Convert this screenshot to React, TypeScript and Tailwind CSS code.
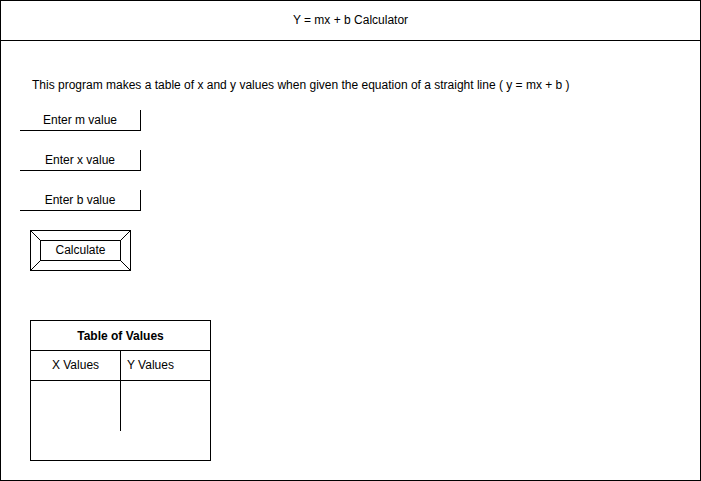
import React from "react";

const font = { fontFamily: '"Liberation Sans", Arial, Helvetica, sans-serif' };

function InputBox({ label }: { label: string }) {
  return (
    <div className="w-[121px] h-[21px] border-b border-r border-black flex items-center justify-center text-[12px] leading-[14px] text-black">
      {label}
    </div>
  );
}

function BevelButton({ label }: { label: string }) {
  return (
    <div className="relative w-[101px] h-[41px] border border-black p-[9px]">
      {/* bevel corners */}
      <svg className="absolute inset-0" width="99" height="39" viewBox="0 0 99 39">
        <line x1="0" y1="0" x2="9.5" y2="9.5" stroke="black" strokeWidth="1" />
        <line x1="99" y1="0" x2="89.5" y2="9.5" stroke="black" strokeWidth="1" />
        <line x1="0" y1="39" x2="9.5" y2="29.5" stroke="black" strokeWidth="1" />
        <line x1="99" y1="39" x2="89.5" y2="29.5" stroke="black" strokeWidth="1" />
      </svg>
      <div className="relative w-full h-full border border-black flex items-center justify-center pb-[1px] text-[12px] leading-[14px] text-black">
        {label}
      </div>
    </div>
  );
}

export default function App() {
  return (
    <div style={font} className="w-[701px] h-[481px] border border-black bg-white text-black">
      {/* HEADER */}
      <div className="h-[40px] border-b border-black flex items-center justify-center pb-[1px] text-[12px] leading-[14px]">
        Y = mx + b Calculator
      </div>

      {/* BODY */}
      <div className="pt-[37px] pl-[19px]">
        <p className="pl-[12px] text-[12px] leading-[14px]">
          This program makes a table of x and y values when given the equation of a straight line ( y = mx + b )
        </p>

        <div className="mt-[18px] flex flex-col gap-[19px]">
          <InputBox label="Enter m value" />
          <InputBox label="Enter x value" />
          <InputBox label="Enter b value" />
        </div>

        <div className="mt-[19px] ml-[10px]">
          <BevelButton label="Calculate" />
        </div>

        {/* TABLE */}
        <div className="mt-[49px] ml-[10px] w-[181px] h-[141px] border border-black text-[12px] leading-[14px]">
          <div className="h-[30px] border-b border-black flex items-center justify-center font-bold">
            Table of Values
          </div>
          <div className="h-[30px] border-b border-black flex pb-[1px]">
            <div className="w-[90px] border-r border-black -mb-[1px] flex items-center justify-center pb-[1px]">X Values</div>
            <div className="flex-1 flex items-center pl-[6px]">Y Values</div>
          </div>
          <div className="flex">
            <div className="w-[90px] h-[50px] border-r border-black" />
          </div>
        </div>
      </div>
    </div>
  );
}
